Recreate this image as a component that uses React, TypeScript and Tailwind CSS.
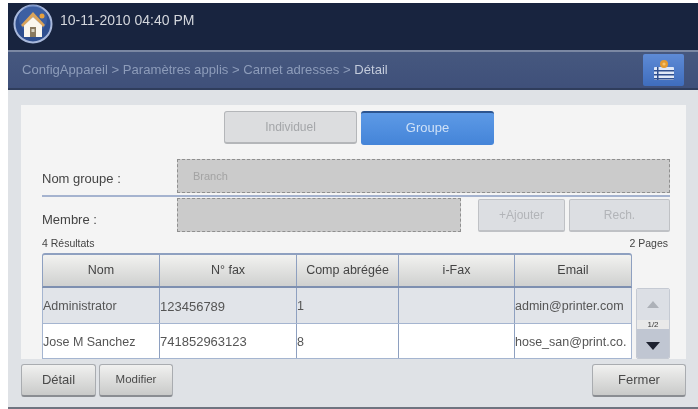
const font = "[font-family:'Liberation_Sans',Arial,sans-serif]";

function HomeIcon() {
  return (
    <svg width="40" height="40" viewBox="0 0 40 40" className="shrink-0">
      <circle cx="20" cy="20" r="18.5" fill="#2f4f8f" stroke="#a9b9dc" strokeWidth="2" />
      <circle cx="20" cy="15" r="14" fill="#4a6fb5" opacity="0.5" />
      <path d="M8 21 20 8l12 13-2 2-10-10-10 10z" fill="#d9a35a" />
      <circle cx="29" cy="12" r="2.5" fill="#e8a13c" />
      <path d="M11 21.5 20 13l9 8.5V33H11z" fill="#fbf7ee" />
      <rect x="17" y="23" width="6" height="10" fill="#8a7a5f" />
      <rect x="18.5" y="25" width="3" height="3" fill="#d9d3c2" />
    </svg>
  );
}

function BookIcon() {
  return (
    <svg width="22" height="22" viewBox="0 0 22 22">
      <rect x="1" y="8" width="20" height="13" rx="1" fill="#dfe8f7" />
      <rect x="1" y="11" width="20" height="1.5" fill="#2f4f8f" />
      <rect x="1" y="15" width="20" height="1.5" fill="#2f4f8f" />
      <rect x="1" y="19" width="20" height="1.5" fill="#2f4f8f" />
      <rect x="4" y="8" width="1.5" height="13" fill="#2f4f8f" />
      <circle cx="11" cy="5" r="4" fill="#e59a2e" />
      <circle cx="11" cy="5" r="1.6" fill="#f5c26b" />
    </svg>
  );
}

function GreyButton({ label, className }: { label: string; className: string }) {
  return (
    <button
      className={`rounded-[3px] border border-[#a9acb0] border-b-2 border-b-[#8a8d92] bg-gradient-to-b from-[#f1f1f0] to-[#c9cac9] text-[#4a4a4a] ${className}`}
    >
      {label}
    </button>
  );
}

const rows = [
  { nom: 'Administrator', fax: '123456789', comp: '1', email: 'admin@printer.com', bg: 'bg-[#e1e4e9]', h: 'h-9' },
  { nom: 'Jose M Sanchez', fax: '741852963123', comp: '8', email: 'hose_san@print.co.', bg: 'bg-white', h: 'h-[35px]' },
];

const cols = ['Nom', 'N° fax', 'Comp abrégée', 'i-Fax', 'Email'];
const colWidths = ['w-[117px]', 'w-[137px]', 'w-[102px]', 'w-[116px]', 'flex-1'];

export default function App() {
  return (
    <div className={`h-[409px] w-[698px] overflow-hidden bg-white pl-2 pt-[3px] ${font}`}>
      <div className="flex h-[406px] flex-col blur-[0.5px]">
        {/* Top bar */}
        <div className="flex h-[47px] items-center gap-[7px] bg-[#18243f] pb-[5px] pl-[5px]">
          <HomeIcon />
          <span className="mb-2 text-[14px] text-[#d3d6dc]">10-11-2010 04:40 PM</span>
        </div>

        {/* Breadcrumb */}
        <div className="flex h-10 items-center justify-between border-y-2 border-t-[#7b88a3] border-b-[#2f3d5c] bg-gradient-to-b from-[#46587f] to-[#3f507a] pl-[14px] pr-[14px]">
          <span className="text-[13.1px] text-[#8d9cba]">
            ConfigAppareil &gt; Paramètres applis &gt; Carnet adresses &gt; <span className="text-[#c3cbdb]">Détail</span>
          </span>
          <div className="flex h-8 w-[41px] items-center justify-center rounded-[2px] bg-gradient-to-b from-[#5e8bd6] to-[#3f6dbd]">
            <BookIcon />
          </div>
        </div>

        {/* Body */}
        <div className="flex min-h-0 flex-1 flex-col border-b-2 border-b-[#6f7480] bg-[#dfe2e6] px-[13px] pt-[15px]">
          <div className="mr-[-1px] flex h-[254px] flex-col bg-[#f4f4f4] pl-[21px] pr-4 pt-[6px]">
            {/* Tabs */}
            <div className="flex gap-1 pl-[182px]">
              <button className="h-[33px] w-[133px] rounded-[3px] border border-[#b4b6b9] border-b-2 bg-[#dcdddf] text-[12px] text-[#a4a6a9]">
                Individuel
              </button>
              <button className="h-[34px] w-[133px] rounded-[3px] border-t-2 border-t-[#2c5590] bg-gradient-to-b from-[#5d9ae6] to-[#4484d8] pb-[2px] text-[13px] text-[#cfe1f7]">
                Groupe
              </button>
            </div>

            {/* Nom groupe */}
            <div className="mt-[14px] flex h-[38px] items-start border-b-2 border-b-[#a5b3cf]">
              <span className="mt-[10px] w-[135px] text-[13px] text-[#444]">Nom groupe :</span>
              <div className="flex h-[34px] flex-1 items-center border border-dashed border-[#8f8f8f] bg-[#cbcbcb] pl-[15px] text-[11px] text-[#a3a3a3]">
                Branch
              </div>
            </div>

            {/* Membre */}
            <div className="mt-[1px] flex h-[34px] items-center">
              <span className="mt-[9px] w-[135px] text-[13px] text-[#444]">Membre :</span>
              <div className="h-[34px] w-[284px] border border-dashed border-[#8f8f8f] bg-[#cbcbcb]" />
              <button className="ml-[17px] h-[33px] w-[87px] rounded-[2px] border border-[#bfc1c5] border-b-2 bg-[#dcdee2] text-[12px] text-[#b2b4b8]">
                +Ajouter
              </button>
              <button className="ml-1 h-[33px] w-[101px] rounded-[2px] border border-[#bfc1c5] border-b-2 bg-[#dcdee2] text-[12px] text-[#b2b4b8]">
                Rech.
              </button>
            </div>

            <div className="mt-[3px] flex h-[18px] items-center justify-between pr-[2px] text-[10.5px] text-[#444]">
              <span>4 Résultats</span>
              <span>2 Pages</span>
            </div>

            {/* Table + scroll */}
            <div className="flex gap-[4px]">
              <div className="w-[590px]">
                <div className="flex h-[35px] overflow-hidden rounded-t-[3px] border-x border-t-2 border-[#8ea0c0] border-b-2 border-b-[#7d8fb0] bg-gradient-to-b from-[#f2f2f0] to-[#cfd0cf]">
                  {cols.map((c, i) => (
                    <div
                      key={c}
                      className={`flex items-center justify-center border-r border-[#8ea0c0] text-[12.5px] text-[#444] last:border-r-0 ${colWidths[i]}`}
                    >
                      {c}
                    </div>
                  ))}
                </div>
                {rows.map((r) => (
                  <div key={r.nom} className={`flex border-b border-l border-r border-[#a5b5d0] pt-0 ${r.h} ${r.bg}`}>
                    <div className="flex w-[117px] items-center overflow-hidden whitespace-nowrap border-r border-[#8ea0c0] pt-[2px] text-[12.5px] text-[#555]">{r.nom}</div>
                    <div className="flex w-[137px] items-center overflow-hidden whitespace-nowrap border-r border-[#8ea0c0] pt-[2px] text-[13px] text-[#555]">{r.fax}</div>
                    <div className="flex w-[102px] items-center overflow-hidden whitespace-nowrap border-r border-[#8ea0c0] pt-[2px] text-[12.5px] text-[#555]">{r.comp}</div>
                    <div className="w-[116px] border-r border-[#8ea0c0]" />
                    <div className="flex flex-1 items-center overflow-hidden whitespace-nowrap pt-[2px] text-[12.5px] text-[#555]">{r.email}</div>
                  </div>
                ))}
              </div>

              {/* Scroll */}
              <div className="mt-[35px] flex h-[71px] w-[34px] flex-col overflow-hidden rounded-[2px] border border-[#c5cad3]">
                <div className="flex h-[31px] items-center justify-center bg-[#dcdfe5]">
                  <svg width="12" height="7" viewBox="0 0 14 8">
                    <path d="M7 0 14 8H0z" fill="#adb1b8" />
                  </svg>
                </div>
                <div className="flex h-[9px] items-center justify-center bg-[#e9e9e9] text-[8px] leading-none text-[#333]">1/2</div>
                <div className="flex flex-1 items-center justify-center bg-[#c0c6d2] pt-1">
                  <svg width="14" height="8" viewBox="0 0 14 8">
                    <path d="M0 0H14L7 8z" fill="#1d2230" />
                  </svg>
                </div>
              </div>
            </div>
          </div>

          {/* Footer buttons */}
          <div className="mr-[-1px] mt-[5px] flex items-start">
            <GreyButton label="Détail" className="h-[33px] w-[75px] text-[13px]" />
            <GreyButton label="Modifier" className="ml-[3px] h-[33px] w-[74px] text-[11.5px]" />
            <GreyButton label="Fermer" className="ml-auto h-[33px] w-[94px] text-[13px]" />
          </div>
        </div>
      </div>
    </div>
  );
}
